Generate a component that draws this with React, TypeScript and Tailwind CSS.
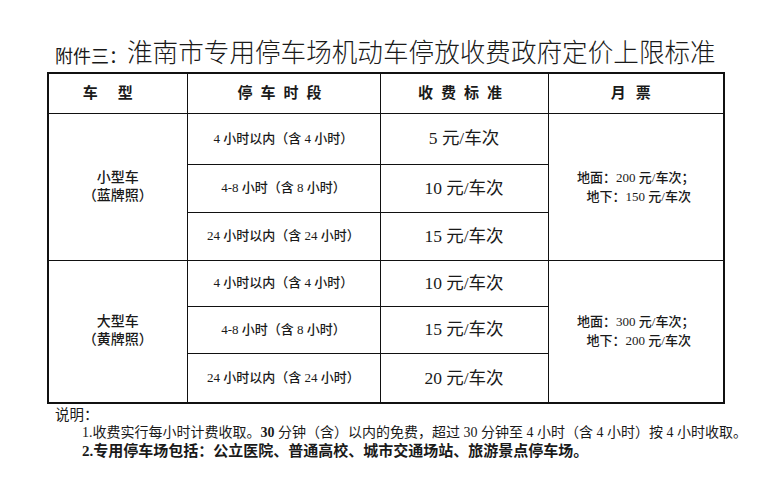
const serif = { fontFamily: '"Liberation Serif", "Noto Sans CJK SC", serif' }

type Row = { period: string; fee: string }

const groups: { name: string; plate: string; rows: Row[]; monthly: [string, string]; heights: string[] }[] = [
  {
    name: '小型车',
    plate: '（蓝牌照）',
    rows: [
      { period: '4 小时以内（含 4 小时）', fee: '5' },
      { period: '4-8 小时（含 8 小时）', fee: '10' },
      { period: '24 小时以内（含 24 小时）', fee: '15' },
    ],
    monthly: ['地面：200 元/车次；', '地下：150 元/车次'],
    heights: ['h-[51px]', 'h-[48px]', 'h-[48px]'],
  },
  {
    name: '大型车',
    plate: '（黄牌照）',
    rows: [
      { period: '4 小时以内（含 4 小时）', fee: '10' },
      { period: '4-8 小时（含 8 小时）', fee: '15' },
      { period: '24 小时以内（含 24 小时）', fee: '20' },
    ],
    monthly: ['地面：300 元/车次；', '地下：200 元/车次'],
    heights: ['h-[46px]', 'h-[47px]', 'h-[50px]'],
  },
]

export default function App() {
  return (
    <div className="h-[485px] w-[783px] overflow-hidden bg-white text-[#1a1a1a]" style={serif}>
      <div className="flex items-end pl-[55px] pt-[39px]">
        <span className="text-[18px] leading-[24px]">附件三：</span>
        <span className="text-[25.6px] font-light leading-[30px]">
          淮南市专用停车场机动车停放收费政府定价上限标准
        </span>
      </div>

      <table className="ml-[47px] mt-[3px] border-collapse border-2 border-[#111]">
        <colgroup>
          <col className="w-[139px]" />
          <col className="w-[193px]" />
          <col className="w-[168px]" />
          <col className="w-[176px]" />
        </colgroup>
        <thead>
          <tr className="h-[40px] text-[15px] font-bold">
            <th className="border-[1.5px] border-[#111] tracking-[20px]">车型</th>
            <th className="border-[1.5px] border-[#111] tracking-[8px]">停车时段</th>
            <th className="border-[1.5px] border-[#111] tracking-[8px]">收费标准</th>
            <th className="border-[1.5px] border-[#111] tracking-[10px]">月票</th>
          </tr>
        </thead>
        <tbody>
          {groups.map((g) =>
            g.rows.map((r, i) => (
              <tr key={g.name + i} className={g.heights[i]}>
                {i === 0 && (
                  <td
                    rowSpan={3}
                    className="border-[1.5px] border-[#111] text-center text-[14px] leading-[18px] font-medium"
                  >
                    <div>{g.name}</div>
                    <div>{g.plate}</div>
                  </td>
                )}
                <td className="border-[1.5px] border-[#111] text-center text-[13px] font-medium">
                  {r.period}
                </td>
                <td className="border-[1.5px] border-[#111] text-center text-[17.5px]">
                  {r.fee} 元/车次
                </td>
                {i === 0 && (
                  <td
                    rowSpan={3}
                    className="border-[1.5px] border-[#111] text-center text-[13px] leading-[19px] font-medium"
                  >
                    <div>{g.monthly[0]}</div>
                    <div className="pl-[6px]">{g.monthly[1]}</div>
                  </td>
                )}
              </tr>
            )),
          )}
        </tbody>
      </table>

      <div className="pl-[55px] pt-[2px] leading-[18px]">
        <div className="text-[14.5px]">说明：</div>
        <div className="pl-[27px] text-[14px]">
          1.收费实行每小时计费收取。<span className="font-bold">30</span> 分钟（含）以内的免费，超过 30 分钟至 4 小时（含 4 小时）按 4 小时收取。
        </div>
        <div className="pl-[27px] text-[15px] font-bold">2.专用停车场包括：公立医院、普通高校、城市交通场站、旅游景点停车场。</div>
      </div>
    </div>
  )
}
